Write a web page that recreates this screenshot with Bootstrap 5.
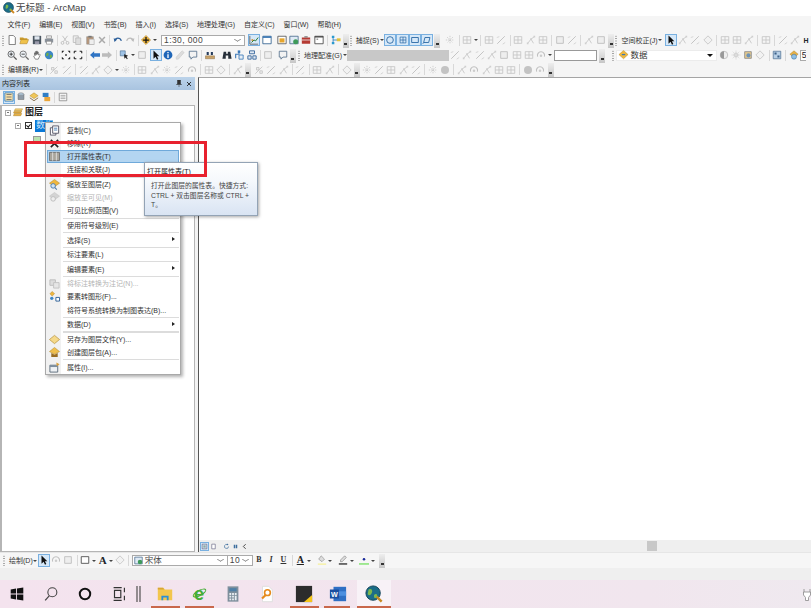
<!DOCTYPE html>
<html lang="zh">
<head>
<meta charset="UTF-8">
<title>无标题 - ArcMap</title>
<link rel="stylesheet" href="https://cdn.jsdelivr.net/npm/bootstrap@5.3.0/dist/css/bootstrap.min.css">
<style>
html,body{height:100%}
body{width:811px;height:608px;overflow:hidden;position:relative;background:#f5f5f5;font-family:"Liberation Sans","Noto Sans CJK SC",sans-serif;font-size:7px;line-height:1;color:#333}
svg{display:block}
.flex-none{flex:none}
.app-title{height:16px;background:#fff;font-size:9.5px;color:#444;padding-left:3px;gap:1px}
.menu-bar{height:16px;padding-left:3px}
.menu-bar a{color:#333;text-decoration:none;padding:0 4.4px}
.tool-row{flex:none;padding-left:2px;white-space:nowrap}
.h16{height:16px}.h14{height:14.5px}
.tools{display:flex;align-items:center;height:100%;flex:none}
.ti{flex:none;width:12.3px;height:12.3px;display:flex;align-items:center;justify-content:center}
.ti svg{width:10px;height:10px}
.ti.on{background:#d6e8f8;outline:1px solid #79b0e0;outline-offset:-1px}
.tsep{flex:none;width:4.6px;height:11px;position:relative}
.tsep::after{content:"";position:absolute;left:2px;top:0;bottom:0;width:1px;background:#d8d8d8}
.tsep.thin{width:3.6px}
.tsep.thin::after{left:1.5px}
.tgrip{flex:none;width:4px;height:11px;background:radial-gradient(circle,#999 .5px,transparent .7px) 0 0/2px 2.4px repeat-y}
.tend{flex:none;width:6px;height:14px;background:linear-gradient(#eee,#c6c6c6);position:relative;margin:0 1px;align-self:flex-end}
.tend::after{content:"";position:absolute;left:1.5px;bottom:3px;width:3px;height:2px;background:#333}
.tcaret{flex:none;width:5px;height:5px;position:relative}
.tcaret::after{content:"";position:absolute;left:.5px;top:1.5px;border:2px solid transparent;border-top:2.2px solid #444}
.tlabel{flex:none;color:#333;padding:0 0 0 2px}
.combo{flex:none;height:11px;background:#fff;border:1px solid #aaa;display:flex;align-items:center;justify-content:space-between;padding:0 2px;font-size:8.5px;color:#444}
.combo-arrow{width:5px;height:5px;border-right:1px solid #777;border-bottom:1px solid #777;transform:scale(1,.6) rotate(45deg);margin:0 2px 2px 0;flex:none}
.combo-black{width:0;height:0;border:3px solid transparent;border-top:3.5px solid #111;margin:3px 1px 0 0;flex:none}
.combo-scale{width:84px;margin-left:4px;letter-spacing:.4px}
.combo-geo{width:102px;background:#c8c8c8;border-color:#c8c8c8}
.combo-rot{width:43px;border-color:#999}
.combo-layer{width:101px;font-size:8.5px;color:#333;border-color:#ececec;padding-left:1px}
.combo-layer svg{margin-right:1px}
.combo-five{width:6px;padding:0 0 0 .5px;overflow:hidden;justify-content:flex-start;border-right:0;color:#222}
.combo-font{width:96px;margin-left:1px;font-size:8.5px;padding-left:1px}
.combo-font svg{margin-right:2px}
.combo-size{width:25px;border-left:0;letter-spacing:.5px}
.main-area{height:475px;flex:none}
.toc{width:198px;flex:none;background:#f3f3f3}
.toc-head{height:13px;background:linear-gradient(#bcd3ea,#a9c4e0);color:#222;padding:0 3px 0 2px;width:195px;font-size:7px}
.toc-tabs{height:15px;padding-left:3px}
.toc-tree{flex:1;background:#fff;border:1px solid #b5b5b5;border-left-width:2px;width:195px;padding-left:3px;font-size:9px;color:#222}
.tree-row{height:13px;gap:1.5px}
.tree-layer{gap:4px;margin-left:10px}
.expander{flex:none;width:6px;height:6px;border:1px solid #aaa;position:relative}
.expander::after{content:"";position:absolute;left:1px;right:1px;top:1.5px;height:1px;background:#777}
.check-box{flex:none;width:7px;height:7px;border:1px solid #333;background:#fff;position:relative}
.check-box::after{content:"";position:absolute;left:1.4px;top:0;width:2.6px;height:4.2px;border-right:1px solid #111;border-bottom:1px solid #111;transform:rotate(40deg)}
.layer-name{background:#0a78d7;color:#cfe6fb;font-size:9px;padding:1px;height:12px;width:18px;overflow:hidden;white-space:nowrap;margin-left:-1px}
.swatch{width:8px;height:7px;background:#b9e2b0;border:1px solid #9a9a9a;margin:4px 0 0 28px}
.map-wrap{border-left:1px solid #555;border-top:1px solid #a5a5a5}
.map-canvas{background:#fff}
.map-foot{height:12px;flex:none;background:#efefef}
.map-foot .ti{width:9px;height:9px}
.map-foot .ti svg{width:7px;height:7px}
.map-track{height:100%;position:relative}
.map-thumb{position:absolute;left:398px;top:1px;width:10px;height:10px;background:#c8c8c8}
.draw-bar{height:16px;flex:none;background:#f6f6f6;border-top:1px solid #e6e6e6}
.status-strip{height:12px;flex:none;background:#efefef}
.task-bar{height:28px;flex:none;background:linear-gradient(90deg,#f4e3ee,#f1e6ee 80%,#efe9ef);position:relative}
.task-item{flex:none;width:34px;height:28px;display:flex;align-items:center;justify-content:center;position:relative}
.task-item svg{width:18px;height:18px}
.task-item.open::after{content:"";position:absolute;left:3px;right:2px;bottom:0;height:2px;background:#c9684c}
.task-item.active{background:#f8f2f7;margin-left:2px}
.task-item.active::after{left:0;right:0}
.task-sticky{margin-left:3px}
.task-word::after{right:5px!important}
.ie-mark{color:#45ad35;font:bold 18px "Liberation Sans",sans-serif;line-height:18px;position:relative}
.ie-mark::after{content:"";position:absolute;left:-2px;top:5px;width:15px;height:6px;border:1px solid #45ad35;border-radius:50%;transform:rotate(-28deg)}
.word-mark{fill:#fff;font:bold 8px "Liberation Sans",sans-serif}
.fmt{font-size:8px;font-family:"Liberation Serif",serif;color:#333}
.fmt-a{font-size:10px;color:#222}
.draw-a{font-size:11px;font-family:"Liberation Serif",serif}
.task-gap{flex:none;width:8px;margin-right:4px}
.ctx-menu{position:absolute;left:45px;top:122px;width:135.5px;min-width:0;padding:.5px 1px;margin:0;border:1px solid #a9a9a9;border-radius:0;font-size:7px;line-height:1;color:#333;background:linear-gradient(90deg,#f1f1f1 15px,#fff 15px);box-shadow:2px 2px 3px rgba(0,0,0,.3);z-index:5}
.ctx-menu .dropdown-item{height:13.25px;padding:0 5px 0 2px;display:flex;align-items:center;color:#333;font-size:7px;position:relative}
.ctx-menu .dropdown-item.disabled{color:#b3b3b3}
.ctx-menu .dropdown-item.hot{background:#b3d5f1;outline:1px solid #6fa9da;outline-offset:-1px}
.ctx-icon{flex:none;width:11px;height:11px;margin-right:7px}
.ctx-icon svg{width:11px;height:11px}
.ctx-sep{height:1.3px;margin:0 0 0 16px;border:0;background:#dcdcdc;opacity:1}
.sub-arrow{position:absolute;right:4px;top:4px;border:2.5px solid transparent;border-left:3px solid #222;border-right:0}
.tip-box{position:absolute;left:144px;top:162px;width:113.5px;height:54px;border:1px solid #93a3b5;background:linear-gradient(#fff,#f5f8fc 35%,#d9e4f3);box-shadow:1px 1px 3px rgba(0,0,0,.35);z-index:6;padding:5px 2px 0 2px;font-size:7px;color:#444}
.tip-title{color:#222;margin-bottom:6px}
.tip-body{padding-left:4px;line-height:9.6px;font-size:6.8px}
.red-frame{position:absolute;left:24px;top:141px;width:183px;height:35.5px;border:3px solid #e8212e;z-index:7}
</style>
</head>
<body class="d-flex flex-column">
<svg width="0" height="0" class="position-absolute">
<defs>
<symbol id="i-new" viewBox="0 0 12 12"><path d="M2.500 .5h5l2.500 2.500v8.500h-7.500z" fill="#fff" stroke="#666"/></symbol>
<symbol id="i-open" viewBox="0 0 12 12"><path d="M1 3h4l1 1h4v2H1z" fill="#c99a2b"/><path d="M1 10.500 2.500 5.500h9l-2 5z" fill="#f0c24a" stroke="#a87b1c" stroke-width=".6"/></symbol>
<symbol id="i-save" viewBox="0 0 12 12"><path d="M1 1h10v10H1z" fill="#4a5560"/><path d="M3 1.500h6v4H3z" fill="#dfe6ee"/><path d="M3.500 7.500h5V11h-5z" fill="#99a"/></symbol>
<symbol id="i-print" viewBox="0 0 12 12"><path d="M3 1h6v3H3z" fill="#eee" stroke="#777" stroke-width=".7"/><path d="M1 4.500h10v4.500H1z" fill="#8a929b"/><path d="M3 7.500h6V11H3z" fill="#fff" stroke="#777" stroke-width=".7"/></symbol>
<symbol id="i-cut" viewBox="0 0 12 12"><path d="M3 1l5 7M9 1 4 8" stroke="#bbb" fill="none"/><circle cx="3" cy="9.500" r="1.700" fill="none" stroke="#bbb"/><circle cx="9" cy="9.500" r="1.700" fill="none" stroke="#bbb"/></symbol>
<symbol id="i-copy" viewBox="0 0 12 12"><path d="M1.500 1h6v8h-6z" fill="#eee" stroke="#bbb"/><path d="M4.500 3.500h6v8h-6z" fill="#ddd" stroke="#bbb"/></symbol>
<symbol id="i-paste" viewBox="0 0 12 12"><path d="M2 2h8v9H2z" fill="#b9977a" stroke="#888" stroke-width=".6"/><path d="M4 1h4v2H4z" fill="#777"/><path d="M5 5h6v6.500H5z" fill="#eee" stroke="#999" stroke-width=".6"/></symbol>
<symbol id="i-del" viewBox="0 0 12 12"><path d="M2.500 2.500l7 7m0-7-7 7" stroke="#aaa" stroke-width="1.800"/></symbol>
<symbol id="i-undo" viewBox="0 0 12 12"><path d="M2.500 6.500C3 3 8.500 2.500 10 7" fill="none" stroke="#2b5f9a" stroke-width="1.500"/><path d="M.8 4l4.200 1.500L1.800 8.500z" fill="#2b5f9a"/></symbol>
<symbol id="i-redo" viewBox="0 0 12 12"><path d="M9.500 6.500C9 3 3.500 2.500 2 7" fill="none" stroke="#bbb" stroke-width="1.500"/><path d="M11.200 4 7 5.500l3.200 3z" fill="#bbb"/></symbol>
<symbol id="i-add" viewBox="0 0 12 12"><path d="M6 .5 11.500 6 6 11.500.5 6z" fill="#efb73e" stroke="#a87b1c" stroke-width=".6"/><path d="M6 2.500v7M2.500 6h7" stroke="#111" stroke-width="1.500"/></symbol>
<symbol id="i-edit" viewBox="0 0 12 12"><path d="M1 1v10h10" fill="none" stroke="#555"/><path d="M3 9l3-3 2 1 3-4" fill="none" stroke="#2a7a3a" stroke-width="1.200"/><path d="M3 5h2v2H3z" fill="#d58a2a"/></symbol>
<symbol id="i-win" viewBox="0 0 12 12"><path d="M1 1.500h10v9H1z" fill="#fff" stroke="#2f5f8f"/><path d="M1 1.500h10v2H1z" fill="#3c78b4"/></symbol>
<symbol id="i-layout" viewBox="0 0 12 12"><path d="M1 1.500h10v9H1z" fill="#fff" stroke="#555"/><path d="M3 4h6v5H3z" fill="#e6a52c"/></symbol>
<symbol id="i-cata" viewBox="0 0 12 12"><path d="M1 1.500h10v9H1z" fill="#dfeaf5" stroke="#4a6b8d"/><circle cx="8" cy="8" r="3" fill="#3e9a5a"/></symbol>
<symbol id="i-toolbox" viewBox="0 0 12 12"><path d="M1 3h10v7.500H1z" fill="#b53a33"/><path d="M4 1.500h4V3H4z" fill="#777"/><path d="M1 6h10" stroke="#eee"/></symbol>
<symbol id="i-py" viewBox="0 0 12 12"><path d="M1 1.500h10v9H1z" fill="#fff" stroke="#444"/><path d="M1 1.500h10v1.500H1z" fill="#444"/><path d="M3 5h2" stroke="#444"/></symbol>
<symbol id="i-model" viewBox="0 0 12 12"><path d="M2.500 2v8M2.500 6h5" stroke="#2a7fbe"/><path d="M1 1h3v2.500H1zM1 8.500h3V11H1z" fill="#2a9ad0"/><path d="M7 4h4.500v3.500H7z" fill="#e2c23a"/></symbol>
<symbol id="i-zin" viewBox="0 0 12 12"><circle cx="5" cy="5" r="3.800" fill="#eef3f8" stroke="#555"/><path d="M8 8l3.500 3.500" stroke="#555" stroke-width="1.500"/><path d="M3 5h4M5 3v4" stroke="#222"/></symbol>
<symbol id="i-zout" viewBox="0 0 12 12"><circle cx="5" cy="5" r="3.800" fill="#eef3f8" stroke="#666"/><path d="M8 8l3.500 3.500" stroke="#666" stroke-width="1.500"/><path d="M3 5h4" stroke="#333"/></symbol>
<symbol id="i-pan" viewBox="0 0 12 12"><path d="M3 6V3.500h1V6M4 5V2h1.200v3M5.200 5V1.500h1.200V5M6.400 5V2.500h1.200V6l1.500-1 .8.800L7.500 11H4L2 7.500z" fill="#fff" stroke="#444" stroke-width=".7"/></symbol>
<symbol id="i-globe" viewBox="0 0 12 12"><circle cx="6" cy="6" r="5" fill="#3c86c6"/><path d="M3 3.500c2-1 3 .5 2.500 2S3.500 8 2.500 7zM7 6c1.500-1 3 0 2.500 2S7 10 7 8z" fill="#6fae45"/></symbol>
<symbol id="i-fixin" viewBox="0 0 12 12"><path d="M1 1h3L1 4zM11 1H8l3 3zM1 11h3l-3-3zM11 11H8l3-3z" fill="#222"/><path d="M5 5h2v2H5z" fill="#222"/></symbol>
<symbol id="i-fixout" viewBox="0 0 12 12"><path d="M1.500 1.500h2.500M1.500 1.500V4M10.500 1.500H8M10.500 1.500V4M1.500 10.500H4M1.500 10.500V8M10.500 10.500H8M10.500 10.500V8" stroke="#222" stroke-width="1.300" fill="none"/></symbol>
<symbol id="i-back" viewBox="0 0 12 12"><path d="M0 6l5-4.500V4h7v4H5v2.500z" fill="#2f74c4"/></symbol>
<symbol id="i-fwd" viewBox="0 0 12 12"><path d="M12 6 7 1.500V4H0v4h7v2.500z" fill="#bcbcbc"/></symbol>
<symbol id="i-sel" viewBox="0 0 12 12"><path d="M1.500 1h6v6h-6z" fill="#9fc3e6" stroke="#46698c" stroke-width=".7"/><path d="M6 5l5 2-2 1 1.500 2.500-1 .7L8 9l-1.500 1.500z" fill="#222"/></symbol>
<symbol id="i-gpage" viewBox="0 0 12 12"><path d="M2 2h8v8H2z" fill="#eee" stroke="#bbb"/></symbol>
<symbol id="i-arrow" viewBox="0 0 12 12"><path d="M3 .5v10l2.500-2.300 1.700 3.500 1.600-.8-1.700-3.400H10z" fill="#111"/></symbol>
<symbol id="i-info" viewBox="0 0 12 12"><circle cx="6" cy="6" r="5.300" fill="#1f66b8"/><path d="M6 2.500v1.500M6 5v4.500" stroke="#fff" stroke-width="1.600"/></symbol>
<symbol id="i-pencil" viewBox="0 0 12 12"><path d="M8.500 1 11 3 4 11H1.500v-2.500z" fill="#ddd" stroke="#c4c4c4" stroke-width=".6"/></symbol>
<symbol id="i-tip" viewBox="0 0 12 12"><path d="M1.500 1.500h9v7H6l-2.500 2.500v-2.500h-2z" fill="#f3f3f3" stroke="#56708c"/></symbol>
<symbol id="i-measure" viewBox="0 0 12 12"><path d="M.5 7h11v3.500H.5z" fill="#c9a36b" stroke="#7a5d34" stroke-width=".5"/><path d="M2 2.500h2.500V6H2zM7 2.500h2.500V6H7z" fill="#253b5c"/></symbol>
<symbol id="i-binoc" viewBox="0 0 12 12"><path d="M2 2h3v2.500h2V2h3l1.500 8.500h-4V6.500h-3v4h-4z" fill="#27303a"/></symbol>
<symbol id="i-route" viewBox="0 0 12 12"><path d="M2 10V5h4V2" fill="none" stroke="#3a78b8" stroke-width="1.300"/><path d="M6 6h5v5H6z" fill="#e6eef6" stroke="#3a78b8"/><path d="M4.500 .5h3v3h-3z" fill="#3a78b8"/></symbol>
<symbol id="i-xy" viewBox="0 0 12 12"><path d="M3 1h6v3.500H3zM1 7h4v4H1zM7 7h4v4H7z" fill="#dfe8f2" stroke="#2a5d96"/></symbol>
<symbol id="i-gtool" viewBox="0 0 12 12"><path d="M1.500 10.500 10 2M3 3h3v3H3zM7 7h3v3H7z" fill="#eee" stroke="#c4c4c4"/></symbol>
<symbol id="i-ggrid" viewBox="0 0 12 12"><path d="M1.500 2h9v8h-9zM6 2v8M1.500 6h9" fill="none" stroke="#c4c4c4"/></symbol>
<symbol id="i-gnode" viewBox="0 0 12 12"><path d="M2 10 6 5l4-3M6 5l3 5" fill="none" stroke="#c4c4c4"/><path d="M1 9h2v2H1zM5 4h2v2H5zM9 1h2v2H9z" fill="#cfcfcf"/></symbol>
<symbol id="i-gdia" viewBox="0 0 12 12"><path d="M6 1l5 5-5 5-5-5z" fill="#f2f2f2" stroke="#c4c4c4"/></symbol>
<symbol id="i-gline" viewBox="0 0 12 12"><path d="M1.500 10.500l9-9" stroke="#c4c4c4" stroke-width="1.200"/><path d="M1 3l3-1M8 11l3-2" stroke="#cfcfcf"/></symbol>
<symbol id="i-gstar" viewBox="0 0 12 12"><path d="M6 1v10M1 6h10M2.500 2.500l7 7m0-7-7 7" stroke="#c9c9c9" stroke-dasharray="1.500 1"/></symbol>
<symbol id="i-grot" viewBox="0 0 12 12"><path d="M2 8a4.300 4.300 0 1 1 8 0" fill="none" stroke="#c0c0c0" stroke-width="1.300"/><circle cx="6" cy="7" r="1.500" fill="#ccc"/></symbol>
<symbol id="i-gball" viewBox="0 0 12 12"><circle cx="6" cy="6" r="4.800" fill="#c3c3c3"/></symbol>
<symbol id="i-ci" viewBox="0 0 12 12"><circle cx="6" cy="6" r="4" fill="none" stroke="#1e5f9e"/></symbol>
<symbol id="i-gr" viewBox="0 0 12 12"><path d="M2.500 2.500h7v7h-7zM6 2.500v7M2.500 6h7" fill="none" stroke="#1e5f9e" stroke-width=".8"/></symbol>
<symbol id="i-sq" viewBox="0 0 12 12"><path d="M2 3h8v6H2z" fill="none" stroke="#1e5f9e"/></symbol>
<symbol id="i-sk" viewBox="0 0 12 12"><path d="M3.500 3h6L8 9H2z" fill="none" stroke="#1e5f9e"/><path d="M2 9l-1 1.500" stroke="#1e5f9e"/></symbol>
<symbol id="i-half" viewBox="0 0 12 12"><circle cx="6" cy="6" r="4.500" fill="#eee" stroke="#bbb"/><path d="M6 1.500a4.500 4.500 0 0 0 0 9z" fill="#999"/></symbol>
<symbol id="i-sun" viewBox="0 0 12 12"><circle cx="6" cy="6" r="3" fill="#ccc"/><path d="M6 .5v11M.5 6h11M2 2l8 8m0-8-8 8" stroke="#ddd"/></symbol>
<symbol id="i-swipe" viewBox="0 0 12 12"><path d="M2 2h8v8H2z" fill="#e6c98c" stroke="#8c8c8c"/><circle cx="6.500" cy="6.500" r="2.500" fill="#6d93b8"/></symbol>
<symbol id="i-effect" viewBox="0 0 12 12"><path d="M1.500 1.500h9v9h-9z" fill="#b7cfe6" stroke="#5d7c9c"/><path d="M3 3h2.500v2.500H3zM6.500 6.500H9V9H6.500z" fill="#3a5f86"/></symbol>
<symbol id="i-trans" viewBox="0 0 12 12"><path d="M6 1l5 4-5 4-5-4z" fill="#e7b146" stroke="#a77f2c" stroke-width=".5"/><circle cx="6" cy="8" r="3" fill="#8fc0e6" stroke="#44749e" stroke-width=".7"/></symbol>
<symbol id="i-layer" viewBox="0 0 12 12"><path d="M6 .5 11.500 5.500 6 10.500.5 5.500z" fill="#efb73e" stroke="#a87b1c" stroke-width=".5"/><path d="M4 5.500h4" stroke="#3978b5" stroke-width="1.500"/></symbol>
<symbol id="i-folder" viewBox="0 0 12 12"><path d="M2.500 2h8l-1 2h-8z" fill="#f2cf76" stroke="#b18a30" stroke-width=".5"/><path d="M1.500 4.500h8l-1 2h-8zM1.500 7h8l-1 2.500h-8z" fill="#e7b146" stroke="#a87b1c" stroke-width=".5"/></symbol>
<symbol id="i-list" viewBox="0 0 12 12"><path d="M1 1h10v10H1z" fill="#f6dea6" stroke="#2f7dc4"/><path d="M3 3h6M3 6h6M3 9h6" stroke="#6b6b6b"/></symbol>
<symbol id="i-drum" viewBox="0 0 12 12"><ellipse cx="6" cy="3" rx="3.500" ry="2" fill="#bcd5ea" stroke="#666" stroke-width=".6"/><path d="M2.500 3v6h7V3" fill="#8e9aa6" stroke="#666" stroke-width=".6"/></symbol>
<symbol id="i-stack" viewBox="0 0 12 12"><path d="M6 1l5 3.500L6 8 1 4.500z" fill="#efc65a" stroke="#a87b1c" stroke-width=".5"/><path d="M1 7l5 3.500L11 7" fill="none" stroke="#7a5d34"/></symbol>
<symbol id="i-src" viewBox="0 0 12 12"><path d="M2 1h7v5H2z" fill="#2f7dc4"/><path d="M4 6h7v5H4z" fill="#e9a53a"/></symbol>
<symbol id="i-opt" viewBox="0 0 12 12"><path d="M1.500 1.500h9v9h-9z" fill="#fff" stroke="#8a8a8a"/><path d="M3 4h6M3 6h6M3 8h6" stroke="#9a9a9a"/></symbol>
<symbol id="i-copy2" viewBox="0 0 12 12"><path d="M1.500 3h6v8h-6z" fill="#fff" stroke="#556"/><path d="M4 1h6.500v8H4z" fill="#fff" stroke="#556"/><path d="M5.500 3.500h3.500M5.500 5.500h3.500" stroke="#4a7fb4"/></symbol>
<symbol id="i-x" viewBox="0 0 12 12"><path d="M2 2l8 8m0-8-8 8" stroke="#222" stroke-width="1.800"/></symbol>
<symbol id="i-table" viewBox="0 0 12 12"><path d="M.5 1.500h11v9H.5z" fill="#a9a59b" stroke="#6e6e6e"/><path d="M4 1.500v9M8 1.500v9" stroke="#e0e0e0"/></symbol>
<symbol id="i-zoomlayer" viewBox="0 0 12 12"><path d="M6 .5l5.500 4-5.500 4-5.500-4z" fill="#efb73e" stroke="#a87b1c" stroke-width=".5"/><circle cx="4.500" cy="7.500" r="2.500" fill="#cfe3f5" stroke="#4a78a8"/><path d="M6.500 9.500l2 2" stroke="#4a78a8" stroke-width="1.200"/></symbol>
<symbol id="i-zoomvis" viewBox="0 0 12 12"><path d="M6 .5l5.500 4-5.500 4-5.500-4z" fill="#d4d4d4" stroke="#bbb" stroke-width=".5"/><circle cx="4.500" cy="7.500" r="2.500" fill="#eee" stroke="#bbb"/></symbol>
<symbol id="i-anno" viewBox="0 0 12 12"><path d="M1 2h6v6H1z" fill="#ddd" stroke="#bbb"/><path d="M5 5h6v6H5z" fill="#e6e6e6" stroke="#c2c2c2"/></symbol>
<symbol id="i-tographic" viewBox="0 0 12 12"><path d="M3.500.5l2.500 2.500-2.500 2.500L1 3z" fill="#efb73e" stroke="#a87b1c" stroke-width=".5"/><circle cx="3" cy="8" r="1.800" fill="#3a86c8"/><path d="M7.500 7h4v4h-4z" fill="#fff" stroke="#2a5d96"/></symbol>
<symbol id="i-lyrfile" viewBox="0 0 12 12"><path d="M6 1.500l5.500 4.500L6 10.500.5 6z" fill="#f5d98a" stroke="#b18a30" stroke-width=".7"/></symbol>
<symbol id="i-pack" viewBox="0 0 12 12"><path d="M6 .5l5.500 4.500L6 8 .5 5z" fill="#f0bf4c" stroke="#a87b1c" stroke-width=".5"/><path d="M2.500 6.500 6 8.500l3.500-2V11h-7z" fill="#9a6d22"/></symbol>
<symbol id="i-props" viewBox="0 0 12 12"><path d="M1 3.500h8.500V11H1z" fill="#eef1f4" stroke="#5a6a7a"/><path d="M1 3.500h8.500V5.500H1z" fill="#7d8e9f"/><path d="M8 .5l3.500 2-3 2z" fill="#d99e35"/></symbol>
<symbol id="i-rect" viewBox="0 0 12 12"><path d="M1.500 2h9v8h-9z" fill="#fff" stroke="#444"/></symbol>
<symbol id="i-mapfoot1" viewBox="0 0 12 12"><path d="M2 2h8v8H2z" fill="#dfe8f0" stroke="#557"/><path d="M4 4h4v4H4z" fill="#8aa"/></symbol>
<symbol id="i-mapfoot2" viewBox="0 0 12 12"><path d="M3 2h6v8H3z" fill="#fff" stroke="#557"/></symbol>
<symbol id="i-refresh" viewBox="0 0 12 12"><path d="M9.500 6a3.500 3.500 0 1 1-1.500-3" fill="none" stroke="#3e6f9e" stroke-width="1.200"/><path d="M7 1l2.500 2-3 1z" fill="#3e6f9e"/></symbol>
<symbol id="i-pause" viewBox="0 0 12 12"><path d="M3 3h2.500v6H3zM6.500 3H9v6H6.500z" fill="#3e6f9e"/></symbol>
<symbol id="i-prev" viewBox="0 0 12 12"><path d="M8 2 4 6l4 4" fill="none" stroke="#333" stroke-width="1.500"/></symbol>
</defs>
</svg>

<div class="app-title d-flex align-items-center flex-none">
  <svg width="12" height="12" viewBox="0 0 12 12"><circle cx="5.500" cy="5.500" r="5" fill="#1c6d88" stroke="#0f3f55" stroke-width=".6"/><path d="M3 3c2-1 3 1 2 2.500S3 7 2.500 6zM6.500 7c1-1 2.500-.5 2 1s-2 1-2 0z" fill="#7db84e"/><path d="M8 8l3 3" stroke="#d08a22" stroke-width="1.800"/></svg>
  <span>无标题 - ArcMap</span>
</div>

<nav class="menu-bar d-flex align-items-center flex-none">
  <a href="#">文件(F)</a><a href="#">编辑(E)</a><a href="#">视图(V)</a><a href="#">书签(B)</a><a href="#">插入(I)</a><a href="#">选择(S)</a><a href="#">地理处理(G)</a><a href="#">自定义(C)</a><a href="#">窗口(W)</a><a href="#">帮助(H)</a>
</nav>

<div class="tool-row h16 d-flex align-items-center">
  <div class="tools" data-t=": new open save print / cut copy paste del / undo redo / add ^"></div>
  <div class="combo combo-scale"><span>1:30, 000</span><i class="combo-arrow"></i></div>
  <div class="tools" data-t="_3 edit! _1 win _2 layout cata toolbox py | model = :"></div>
  <span class="tlabel">捕捉(S)</span>
  <div class="tools" data-t="^ ci! gr! sq! sk! = _3 gstar | ggrid ^ | ggrid gline | ggrid gnode ggrid | gpage gline | gnode gpage = :"></div>
  <span class="tlabel">空间校正(J)</span>
  <div class="tools" data-t="^ _2 arrow! gnode gline gdia | ggrid ggrid gnode | ggrid | gline gnode"></div>
  <span class="tlabel fw-bold text-dark">H</span>
</div>

<div class="tool-row h14 d-flex align-items-center">
  <div class="tools" data-t="_4 zin zout pan globe | fixin fixout | back fwd | sel ^ gpage _2 arrow! info pencil tip | measure _5 binoc route xy | gpage _2 tip = _1 :"></div>
  <span class="tlabel">地理配准(G)</span>
  <div class="tools" data-t="^"></div>
  <div class="combo combo-geo"></div>
  <div class="tools" data-t="gline gnode gline gnode gpage ggrid ggrid grot ^ _2"></div>
  <div class="combo combo-rot"></div>
  <div class="tools" data-t="_1 = _6 :"></div>
  <div class="combo combo-layer"><span class="d-flex align-items-center"><svg width="11" height="10"><use href="#i-layer"/></svg>数据</span><i class="combo-black"></i></div>
  <div class="tools" data-t="half sun swipe gdia | effect | trans"></div>
  <div class="combo combo-five"><span>5</span></div>
</div>

<div class="tool-row h14 d-flex align-items-center">
  <div class="tools" data-t=":"></div>
  <span class="tlabel">编辑器(R)</span>
  <div class="tools" data-t="^ | gtool gline | gline gnode gdia ^ gstar | ggrid gnode gstar gline grot | ggrid gdia | gnode = _1 gtool gline gnode | gline | ggrid gnode | gdia = gstar gline ggrid gnode gline | gstar gball | gnode grot gnode ggrid ggrid | gball grot ="></div>
</div>

<div class="main-area d-flex">
  <aside class="toc d-flex flex-column">
    <div class="toc-head d-flex align-items-center justify-content-between"><span>内容列表</span>
      <span class="d-flex align-items-center gap-1"><svg width="6" height="7" viewBox="0 0 6 7"><path d="M1.500 0h3v3.500l1 1H.5l1-1zM3 4.500V7" fill="#333" stroke="#333" stroke-width=".5"/></svg><svg width="6" height="6"><use href="#i-x"/></svg></span>
    </div>
    <div class="toc-tabs d-flex align-items-center"><div class="tools" data-t="list! drum stack src | opt"></div></div>
    <div class="toc-tree">
      <div class="tree-row d-flex align-items-center"><i class="expander"></i><svg width="11" height="11"><use href="#i-folder"/></svg><b>图层</b></div>
      <div class="tree-row d-flex align-items-center tree-layer"><i class="expander"></i><i class="check-box"></i><span class="layer-name">数据</span></div>
      <div class="swatch"></div>
    </div>
  </aside>
  <section class="map-wrap flex-grow-1 d-flex flex-column">
    <div class="map-canvas flex-grow-1"></div>
    <div class="map-foot d-flex align-items-center">
      <div class="tools" data-t="_1 mapfoot1! mapfoot2 _4 refresh pause prev"></div>
      <div class="map-track flex-grow-1"><div class="map-thumb"></div></div>
    </div>
  </section>
</div>

<div class="draw-bar d-flex align-items-center tool-row">
  <div class="tools" data-t="_1 :"></div>
  <span class="tlabel">绘制(D)</span>
  <div class="tools" data-t="^ arrow! grot gpage | rect ^ "></div>
  <b class="ti text-dark draw-a">A</b>
  <div class="tools" data-t="^ gdia |"></div>
  <div class="combo combo-font"><span class="d-flex align-items-center"><svg width="9" height="9"><use href="#i-cata"/></svg>宋体</span><i class="combo-arrow"></i></div>
  <div class="combo combo-size"><span>10</span><i class="combo-arrow"></i></div>
  <div class="format-group d-flex align-items-center">
    <b class="ti fmt">B</b><i class="ti fmt fw-bold">I</i><u class="ti fmt fw-bold">U</u>
    <div class="tools" data-t="|"></div>
    <u class="ti fmt fw-bold fmt-a">A</u>
    <div class="tools" data-t="^ _4"></div>
    <span class="ti"><svg viewBox="0 0 12 12"><path d="M5 1l4 4-3 3-4-3z" fill="#ddd" stroke="#777" stroke-width=".6"/><path d="M1 10h10v2H1z" fill="#f6f2b0"/></svg></span>
    <div class="tools" data-t="^ _4"></div>
    <span class="ti"><svg viewBox="0 0 12 12"><path d="M8 1l2 2-5 5H3V6z" fill="#ddd" stroke="#666" stroke-width=".6"/><path d="M1 10h10v1.500H1z" fill="#222"/></svg></span>
    <div class="tools" data-t="^ _4"></div>
    <span class="ti"><svg viewBox="0 0 12 12"><circle cx="6" cy="5" r="1.500" fill="#1a2a9a"/><path d="M0 10h12v1.500H0z" fill="#6fe05a"/></svg></span>
    <div class="tools" data-t="^ _3 ="></div>
  </div>
</div>

<div class="status-strip"></div>

<footer class="task-bar d-flex align-items-center">
  <div class="task-item"><svg viewBox="0 0 20 20"><path d="M3 5l6-1v5.500H3zM10 3.800l7-1v6.700h-7zM3 10.500h6V16l-6-1zM10 10.500h7v6.700l-7-1z" fill="#111"/></svg></div>
  <div class="task-item"><svg viewBox="0 0 20 20"><circle cx="11.500" cy="8" r="5" fill="none" stroke="#444" stroke-width="1.200"/><path d="M8 12l-4.500 5" stroke="#444" stroke-width="1.400"/></svg></div>
  <div class="task-item"><svg viewBox="0 0 20 20"><circle cx="10" cy="10" r="5.800" fill="none" stroke="#111" stroke-width="2.200"/></svg></div>
  <div class="task-item"><svg viewBox="0 0 20 20"><path d="M4 3h9M4 17h9M5 6h7v8H5zM16 3v5M16 12v5" fill="none" stroke="#333" stroke-width="1.300"/></svg></div>
  <div class="task-gap"><svg width="5" height="16" viewBox="0 0 5 16"><path d="M1 0v16M4 0v16" stroke="#444" stroke-width="1.100"/></svg></div>
  <div class="task-item open"><svg viewBox="0 0 20 20"><path d="M2 3h6l2 2h8v12H2z" fill="#f2c64e"/><path d="M2 3h6l1 2H2z" fill="#d8a636"/><path d="M6 12h8v5h-2v-3H8v3H6z" fill="#2b8fd6"/></svg></div>
  <div class="task-item open"><span class="ie-mark">e</span></div>
  <div class="task-item"><svg viewBox="0 0 20 20"><path d="M4 1.500h12v17H4z" fill="#7e8f9c"/><path d="M6 3.500h8V7H6z" fill="#4f7fa6"/><path d="M6 9h2v2H6zM9 9h2v2H9zM12 9h2v2h-2zM6 12h2v2H6zM9 12h2v2H9zM12 12h2v5h-2zM6 15h2v2H6zM9 15h2v2H9z" fill="#e9eef2"/></svg></div>
  <div class="task-item"><svg viewBox="0 0 20 20"><path d="M5 1.500h7l4 4v13H5z" fill="#fff" stroke="#ddd"/><circle cx="10.500" cy="8.500" r="3.200" fill="none" stroke="#e68a1e" stroke-width="1.800"/><path d="M8.500 11l-4 4" stroke="#e68a1e" stroke-width="2.400"/></svg></div>
  <div class="task-item open task-sticky"><svg viewBox="0 0 20 20"><path d="M1 1h18v18H1z" fill="#2c2c2c"/><path d="M19 11v8H10z" fill="#f5c518"/></svg></div>
  <div class="task-item open task-word"><svg viewBox="0 0 20 20"><path d="M5 2h14v16H5z" fill="#2f6fc4"/><path d="M5 7h14v5H5z" fill="#4d8fe0"/><path d="M1 5h10v10H1z" fill="#1b4fa0"/><text x="2.200" y="13" class="word-mark">W</text></svg></div>
  <div class="task-item open active"><svg viewBox="0 0 20 20"><circle cx="9" cy="9" r="8" fill="#1c6d88" stroke="#0f3f55"/><path d="M4 5c3-2 5 1 3.500 4S4 12 3 10zM10 11c2-2 4-1 3.500 1.500S10 15 10 13z" fill="#7db84e"/><path d="M13 13l5.500 5.500" stroke="#c58a22" stroke-width="2.600"/></svg></div>
  <div class="plug-mark ms-auto"><svg width="8" height="13" viewBox="0 0 8 13"><path d="M1 4V1m6 3V1M.5 4h7v3L5.500 9.500v3h-3v-3L.5 7z" fill="#fff" stroke="#888" stroke-width=".8"/></svg></div>
</footer>

<ul class="dropdown-menu show ctx-menu">
  <li><a class="dropdown-item"><span class="ctx-icon"><svg><use href="#i-copy2"/></svg></span>复制(C)</a></li>
  <li><a class="dropdown-item"><span class="ctx-icon"><svg><use href="#i-x"/></svg></span>移除(R)</a></li>
  <li><a class="dropdown-item hot"><span class="ctx-icon"><svg><use href="#i-table"/></svg></span>打开属性表(T)</a></li>
  <li><a class="dropdown-item"><span class="ctx-icon"></span>连接和关联(J)</a></li>
  <li><hr class="ctx-sep"></li>
  <li><a class="dropdown-item"><span class="ctx-icon"><svg><use href="#i-zoomlayer"/></svg></span>缩放至图层(Z)</a></li>
  <li><a class="dropdown-item disabled"><span class="ctx-icon"><svg><use href="#i-zoomvis"/></svg></span>缩放至可见(M)</a></li>
  <li><a class="dropdown-item"><span class="ctx-icon"></span>可见比例范围(V)</a></li>
  <li><hr class="ctx-sep"></li>
  <li><a class="dropdown-item"><span class="ctx-icon"></span>使用符号级别(E)</a></li>
  <li><hr class="ctx-sep"></li>
  <li><a class="dropdown-item"><span class="ctx-icon"></span>选择(S)<i class="sub-arrow"></i></a></li>
  <li><hr class="ctx-sep"></li>
  <li><a class="dropdown-item"><span class="ctx-icon"></span>标注要素(L)</a></li>
  <li><hr class="ctx-sep"></li>
  <li><a class="dropdown-item"><span class="ctx-icon"></span>编辑要素(E)<i class="sub-arrow"></i></a></li>
  <li><hr class="ctx-sep"></li>
  <li><a class="dropdown-item disabled"><span class="ctx-icon"><svg><use href="#i-anno"/></svg></span>将标注转换为注记(N)...</a></li>
  <li><a class="dropdown-item"><span class="ctx-icon"><svg><use href="#i-tographic"/></svg></span>要素转图形(F)...</a></li>
  <li><a class="dropdown-item"><span class="ctx-icon"></span>将符号系统转换为制图表达(B)...</a></li>
  <li><hr class="ctx-sep"></li>
  <li><a class="dropdown-item"><span class="ctx-icon"></span>数据(D)<i class="sub-arrow"></i></a></li>
  <li><hr class="ctx-sep"></li>
  <li><a class="dropdown-item"><span class="ctx-icon"><svg><use href="#i-lyrfile"/></svg></span>另存为图层文件(Y)...</a></li>
  <li><a class="dropdown-item"><span class="ctx-icon"><svg><use href="#i-pack"/></svg></span>创建图层包(A)...</a></li>
  <li><hr class="ctx-sep"></li>
  <li><a class="dropdown-item"><span class="ctx-icon"><svg><use href="#i-props"/></svg></span>属性(I)...</a></li>
</ul>

<div class="tip-box">
  <div class="tip-title">打开属性表(T)</div>
  <div class="tip-body">打开此图层的属性表。快捷方式:<br>CTRL + 双击图层名称或 CTRL +<br>T。</div>
</div>
<div class="red-frame"></div>

<script src="https://cdn.jsdelivr.net/npm/bootstrap@5.3.0/dist/js/bootstrap.bundle.min.js"></script>
<script>
// разворачиваем короткую запись панелей инструментов
document.querySelectorAll(".tools").forEach(box => {
    box.dataset.t.trim().split(/\s+/).forEach(tok => {
        const el = document.createElement("span");
        if (tok === ":") el.className = "tgrip";
        else if (tok === "|") el.className = "tsep";
        else if (tok === "/") el.className = "tsep thin";
        else if (tok === "^") el.className = "tcaret";
        else if (tok === "=") el.className = "tend";
        else if (tok[0] === "_") { el.style.flex = "none"; el.style.width = tok.slice(1) + "px"; }
        else {
            const on = tok.endsWith("!");
            const name = tok.replace("!", "");
            el.className = on ? "ti on" : "ti";
            el.innerHTML = `<svg><use href="#i-${name}"/></svg>`;
        }
        box.appendChild(el);
    });
});
</script>
</body>
</html>
